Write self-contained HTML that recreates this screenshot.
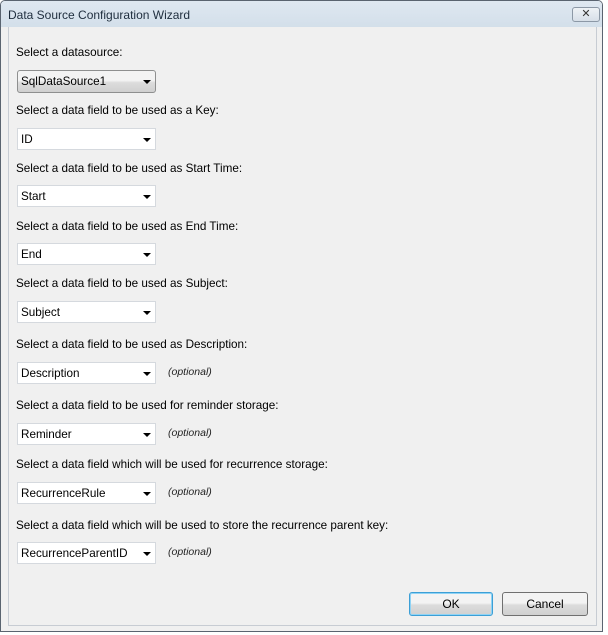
<html><head><style>
body{margin:0;width:608px;height:635px;background:#fff;font-family:"Liberation Sans",sans-serif;font-size:11.7px;color:#000;position:relative;overflow:hidden}
.win{position:absolute;left:0;top:0;width:603px;height:632px;border:1px solid #5a6470;border-radius:5px 5px 0 0;background:#f0f0f0;box-sizing:border-box}
.title{position:absolute;left:0;top:0;width:601px;height:26px;background:linear-gradient(#dfe8f1,#d3dfea);border-radius:4px 4px 0 0}
.title span{position:absolute;left:7px;top:7px;font-size:12px;color:#1e2d3d}
.x{position:absolute;left:571px;top:6px;width:28px;height:15px;border:1px solid #8c98a6;border-radius:3px;background:linear-gradient(#eef2f6,#d7dfe8);box-sizing:border-box;text-align:center;font-size:11px;line-height:13px;color:#333}
.inner{position:absolute;left:7px;top:26px;width:587px;height:598px;background:#f0f0f0;border:1px solid #c7ccd3;border-top:none}
.l{position:absolute;left:16px}
.dd{position:absolute;left:17px;width:139px;height:22px;background:#fff;border:1px solid #d5d9de;box-sizing:border-box}
.dd span{position:absolute;left:3px;top:4px}
.dd i{position:absolute;right:4px;top:9px;width:0;height:0;border-left:4px solid transparent;border-right:4px solid transparent;border-top:4px solid #000}
.btn{background:linear-gradient(#f3f3f3 45%,#dcdcdc 55%,#d0d0d0);border:1px solid #707070;border-radius:3px}
.o{position:absolute;left:168px;font-style:italic;font-size:10.5px;color:#222}
.b{position:absolute;top:592px;height:24px;box-sizing:border-box;text-align:center;line-height:22px;font-size:12px}
</style></head><body>
<div class="win"><div class="title"><span>Data Source Configuration Wizard</span></div><div class="x">✕</div><div class="inner"></div></div>
<div class="l" style="top:46px">Select a datasource:</div>
<div class="dd btn" style="top:70px;height:23px;border-color:#8e8f8f"><span>SqlDataSource1</span><i></i></div>
<div class="l" style="top:104px">Select a data field to be used as a Key:</div>
<div class="dd" style="top:128px"><span>ID</span><i></i></div>
<div class="l" style="top:162px">Select a data field to be used as Start Time:</div>
<div class="dd" style="top:185px"><span>Start</span><i></i></div>
<div class="l" style="top:220px">Select a data field to be used as End Time:</div>
<div class="dd" style="top:243px"><span>End</span><i></i></div>
<div class="l" style="top:277px">Select a data field to be used as Subject:</div>
<div class="dd" style="top:301px"><span>Subject</span><i></i></div>
<div class="l" style="top:338px">Select a data field to be used as Description:</div>
<div class="dd" style="top:362px"><span>Description</span><i></i></div><div class="o" style="top:366px">(optional)</div>
<div class="l" style="top:399px">Select a data field to be used for reminder storage:</div>
<div class="dd" style="top:423px"><span>Reminder</span><i></i></div><div class="o" style="top:427px">(optional)</div>
<div class="l" style="top:458px">Select a data field which will be used for recurrence storage:</div>
<div class="dd" style="top:482px"><span>RecurrenceRule</span><i></i></div><div class="o" style="top:486px">(optional)</div>
<div class="l" style="top:519px">Select a data field which will be used to store the recurrence parent key:</div>
<div class="dd" style="top:542px"><span>RecurrenceParentID</span><i></i></div><div class="o" style="top:546px">(optional)</div>
<div class="b btn" style="left:409px;width:84px;border-color:#3c9fd6;box-shadow:inset 0 0 0 1px #8fd3f5">OK</div>
<div class="b btn" style="left:502px;width:86px">Cancel</div>
</body></html>
